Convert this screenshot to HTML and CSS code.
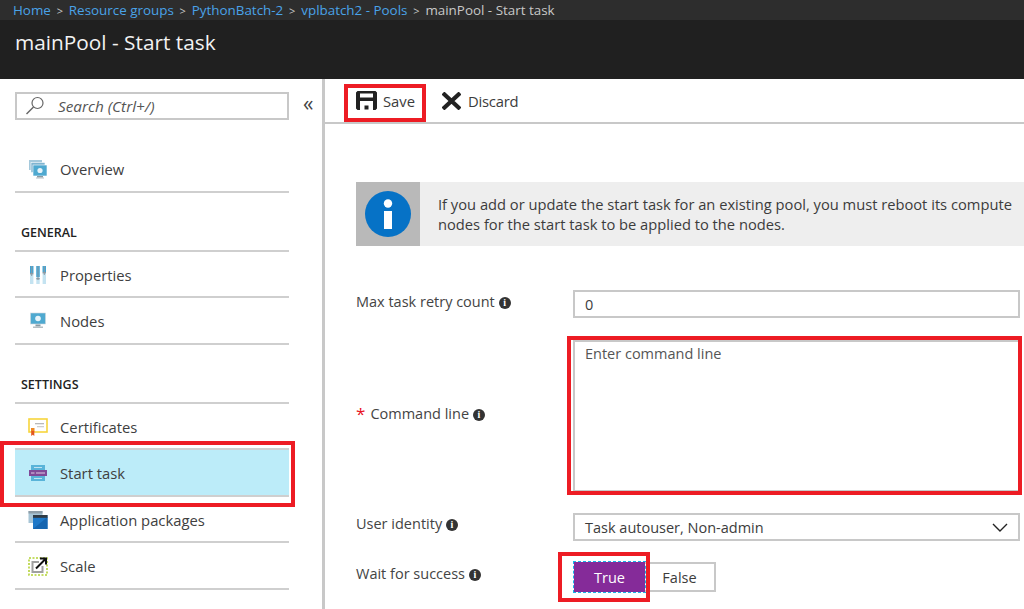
FILE: index.html
```html
<!DOCTYPE html>
<html lang="en">
<head>
<meta charset="utf-8">
<title>mainPool - Start task</title>
<link rel="stylesheet" href="styles.css">
</head>
<body>
<header class="header">
  <nav class="crumbs">
    <a class="crumb">Home</a><span class="sep">&gt;</span>
    <a class="crumb">Resource groups</a><span class="sep">&gt;</span>
    <a class="crumb">PythonBatch-2</a><span class="sep">&gt;</span>
    <a class="crumb">vplbatch2 - Pools</a><span class="sep">&gt;</span>
    <span class="crumb-current">mainPool - Start task</span>
  </nav>
  <h1 class="title">mainPool - Start task</h1>
</header>
<div class="main">
  <aside class="sidebar">
    <div class="search-row">
      <div class="search">
        <svg class="search-icon" width="20" height="20" viewBox="0 0 20 20"><circle cx="12.500" cy="7" r="5.500" fill="none" stroke="#666" stroke-width="1.200"/><path d="M8.500 11 1.500 18" stroke="#666" stroke-width="1.400"/></svg>
        <span class="search-text">Search (Ctrl+/)</span>
      </div>
      <span class="collapse">«</span>
    </div>
    <ul class="nav nav-first">
      <li class="nav-item">
        <svg class="nav-icon" width="20" height="20" viewBox="0 0 20 20"><rect x="1" y="1" width="13" height="10" fill="#a5c9dc"/><rect x="3" y="3.500" width="14" height="10" fill="#7fb4d0" stroke="#fff" stroke-width=".6"/><rect x="5" y="6" width="14" height="11" fill="#4fa9d0" stroke="#fff" stroke-width=".6"/><circle cx="12" cy="11.500" r="2.600" fill="#e8f4fa"/><rect x="9" y="17" width="6" height="1.500" fill="#8a9aa2"/><rect x="8" y="18.500" width="8" height="1" fill="#b5bec3"/></svg>
        <span>Overview</span>
      </li>
    </ul>
    <div class="nav-heading">GENERAL</div>
    <ul class="nav">
      <li class="nav-item">
        <svg class="nav-icon" width="20" height="20" viewBox="0 0 20 20"><g fill="#c4e3f1"><rect x="2" y="1" width="3.400" height="18"/><rect x="8.300" y="1" width="3.400" height="18"/><rect x="14.600" y="1" width="3.400" height="18"/></g><g fill="#3fa5d6"><rect x="2" y="1" width="3.400" height="7"/><rect x="8.300" y="1" width="3.400" height="11"/><rect x="14.600" y="1" width="3.400" height="6"/></g><g fill="#8c9aa3"><rect x="3.200" y="1" width="1" height="10"/><rect x="9.500" y="1" width="1" height="14"/><rect x="15.800" y="1" width="1" height="9"/><rect x="2" y="8" width="3.400" height="1.400"/><rect x="8.300" y="13" width="3.400" height="1.400"/><rect x="14.600" y="7" width="3.400" height="1.400"/></g></svg>
        <span>Properties</span>
      </li>
      <li class="nav-item">
        <svg class="nav-icon" width="20" height="20" viewBox="0 0 20 20"><rect x="2.500" y="2" width="15" height="11" fill="#4fa9d0" stroke="#cfd8dc" stroke-width=".6"/><circle cx="10" cy="7.500" r="2.800" fill="#e8f4fa"/><rect x="7.500" y="13.500" width="5" height="2" fill="#8a9aa2"/><rect x="5" y="15.500" width="10" height="1.500" fill="#b5bec3"/></svg>
        <span>Nodes</span>
      </li>
    </ul>
    <div class="nav-heading">SETTINGS</div>
    <ul class="nav">
      <li class="nav-item">
        <svg class="nav-icon" width="20" height="20" viewBox="0 0 20 20"><rect x="1" y="2" width="18" height="13" fill="#fff" stroke="#f7d53c" stroke-width="1.600"/><rect x="7" y="6" width="9" height="1.300" fill="#b9b9b9"/><rect x="9" y="9" width="7" height="1.300" fill="#cfcfcf"/><rect x="3" y="11" width="3.500" height="3.500" fill="#f08a24"/><path d="M3.200 14h3.100v5l-1.500-1.200L3.200 19z" fill="#e2561f"/></svg>
        <span>Certificates</span>
      </li>
      <li class="nav-item nav-item-active">
        <svg class="nav-icon" width="20" height="20" viewBox="0 0 20 20"><rect x="3" y="2" width="14" height="5" fill="#59b4d9"/><rect x="3" y="13" width="14" height="5" fill="#59b4d9"/><rect x="1" y="7" width="18" height="6" fill="#804998"/><rect x="8" y="9.400" width="9" height="1.200" fill="#cdb5d8"/><rect x="3" y="9.400" width="3.500" height="1.200" fill="#cdb5d8"/><rect x="6" y="4" width="8" height="1" fill="#bfe3f2"/><rect x="6" y="15" width="8" height="1" fill="#bfe3f2"/></svg>
        <span>Start task</span>
      </li>
      <li class="nav-item">
        <svg class="nav-icon" width="20" height="20" viewBox="0 0 20 20"><rect x="0.500" y="1" width="14" height="12" fill="#a7c5d6"/><rect x="0.500" y="1" width="14" height="2.500" fill="#8f9ea8"/><rect x="5" y="5" width="14.500" height="14" fill="#1e78c8"/><path d="M5 19 19.500 7v12z" fill="#1565b0"/><rect x="5" y="5" width="14.500" height="2.800" fill="#2f3a44"/></svg>
        <span>Application packages</span>
      </li>
      <li class="nav-item">
        <svg class="nav-icon" width="20" height="20" viewBox="0 0 20 20"><rect x="1" y="2" width="18" height="17" fill="none" stroke="#b3d235" stroke-width="1.600" stroke-dasharray="2 1.500"/><path d="M11 6H4.500v10h10V10" fill="none" stroke="#a0a0a0" stroke-width="2"/><path d="M8 12.500 17 3.500M12 2.500h6v6" fill="none" stroke="#111" stroke-width="2"/></svg>
        <span>Scale</span>
      </li>
    </ul>
  </aside>
  <section class="content">
    <div class="toolbar">
      <button class="tool tool-save">
        <svg width="21" height="19" viewBox="0 0 21 19"><path fill="#222" d="M1.500 0H19.500L21 1.500V17.500L19.500 19H17V10H4V19H1.500L0 17.500V1.500z"/><rect x="4" y="2.500" width="13" height="4" fill="#fff"/><rect x="8.500" y="14.500" width="4" height="4" fill="#222"/></svg>
        <span>Save</span>
      </button>
      <button class="tool tool-discard">
        <svg width="19" height="18" viewBox="0 0 19 18"><path d="M2.500 2.500 16.500 15.500M16.500 2.500 2.500 15.500" stroke="#222" stroke-width="4.200" fill="none" stroke-linecap="square"/></svg>
        <span>Discard</span>
      </button>
    </div>
    <div class="banner">
      <div class="banner-icon">
        <svg width="46" height="46" viewBox="0 0 46 46"><circle cx="23" cy="23" r="23" fill="#0672c6"/><circle cx="23" cy="12.500" r="4.200" fill="#fff"/><rect x="19" y="20" width="8" height="18" fill="#fff"/></svg>
      </div>
      <p class="banner-text">If you add or update the start task for an existing pool, you must reboot its compute nodes for the start task to be applied to the nodes.</p>
    </div>
    <form class="form">
      <div class="row row-retry">
        <label class="label">Max task retry count <span class="hint">i</span></label>
        <div class="field input">0</div>
      </div>
      <div class="row row-command">
        <label class="label"><span class="required">*</span>Command line <span class="hint">i</span></label>
        <div class="field textarea">Enter command line</div>
      </div>
      <div class="row row-identity">
        <label class="label">User identity <span class="hint">i</span></label>
        <div class="field input select">
          <span>Task autouser, Non-admin</span>
          <svg width="16" height="9" viewBox="0 0 16 9"><path d="M1 1l7 7 7-7" fill="none" stroke="#222" stroke-width="1.400"/></svg>
        </div>
      </div>
      <div class="row row-wait">
        <label class="label">Wait for success <span class="hint">i</span></label>
        <div class="toggle">
          <span class="toggle-btn toggle-on">True</span>
          <span class="toggle-btn toggle-off">False</span>
        </div>
      </div>
    </form>
  </section>
</div>
<div class="mark mark-save"></div>
<div class="mark mark-task"></div>
<div class="mark mark-command"></div>
<div class="mark mark-true"></div>
</body>
</html>
```
FILE: styles.css
```css
* { box-sizing: border-box; }
html, body { margin: 0; padding: 0; }
body {
  position: relative;
  width: 1024px;
  height: 609px;
  overflow: hidden;
  background: #fff;
  color: #3c3c3c;
  font-family: "Open Sans", "Noto Sans", "Liberation Sans", sans-serif;
  font-size: 14px;
}
.header { height: 79px; background: #202020; }
.crumbs {
  display: flex;
  align-items: center;
  height: 20px;
  padding-left: 13px;
  background: #2d2d2d;
  font-size: 13.400px;
  white-space: nowrap;
}
.crumb { color: #4aa3e8; }
.crumb-current { color: #c8c8c8; }
.sep { width: 18px; text-align: center; color: #c8c8c8; font-size: 11px; }
.crumbs .sep:last-of-type { width: 19px; }
.title {
  margin: 0;
  padding: 7px 0 0 15px;
  color: #f2f2f2;
  font-size: 20.800px;
  font-weight: 400;
  line-height: 30px;
}
.main { display: flex; height: 530px; }
.sidebar {
  flex: 0 0 325px;
  padding: 13px 33px 0 15px;
  border-right: 3px solid #c8c8c8;
}
.search-row { position: relative; display: flex; }
.search {
  display: flex;
  align-items: center;
  width: 274px;
  height: 28px;
  border: 2px solid #c8c8c8;
  padding-left: 8px;
}
.search-text { margin-left: 13px; font-style: italic; font-size: 15.300px; color: #555; }
.collapse {
  position: absolute;
  left: 288px;
  top: -2px;
  color: #444;
  font-size: 21px;
  line-height: 26px;
}
.nav { list-style: none; margin: 0; padding: 0; width: 274px; }
.nav-first { margin-top: 26px; }
.nav-item {
  display: flex;
  align-items: center;
  height: 46.500px;
  padding: 2px 0 0 13px;
  border-bottom: 2px solid #cfcfcf;
  font-size: 14.800px;
  color: #404040;
}
.nav-icon { flex: none; margin-right: 12px; }
.nav-item-active { background: #bcecf9; }
.nav-heading {
  height: 59px;
  padding: 31px 0 0 6px;
  border-bottom: 2px solid #cfcfcf;
  width: 274px;
  color: #222;
  font-size: 12.500px;
  font-weight: 600;
  line-height: 18px;
}
.content { flex: 1; min-width: 0; overflow: hidden; }
.toolbar {
  display: flex;
  align-items: center;
  height: 45px;
  border-bottom: 2px solid #c8c8c8;
  padding-left: 31px;
}
.tool {
  display: flex;
  align-items: center;
  border: 0;
  padding: 0;
  background: none;
  color: #3c3c3c;
  font: inherit;
  font-size: 14.800px;
}
.tool span { padding-top: 1px; }
.tool-save svg { margin-right: 6px; }
.tool-discard { margin-left: 27px; letter-spacing: -0.25px; }
.tool-discard svg { margin-right: 7px; }
.banner {
  display: flex;
  width: 690px;
  height: 64px;
  margin: 58px 0 0 31px;
  background: #eeeeee;
}
.banner-icon {
  display: flex;
  flex: 0 0 64px;
  align-items: center;
  justify-content: center;
  background: #b9b9b9;
}
.banner-text {
  margin: 0;
  width: 600px;
  padding: 12px 0 0 18px;
  font-size: 14.700px;
  line-height: 20px;
  color: #3c3c3c;
}
.form { width: 664px; margin-left: 31px; }
.row { display: grid; grid-template-columns: 217px 447px; }
.label {
  font-size: 14.500px;
  line-height: 20px;
  color: #444;
  white-space: nowrap;
}
.hint {
  display: inline-block;
  width: 12px;
  height: 12px;
  border-radius: 50%;
  background: #333;
  color: #fff;
  font-size: 10px;
  font-weight: 700;
  font-family: "Liberation Serif", serif;
  line-height: 12px;
  text-align: center;
  vertical-align: 1px;
}
.required { margin-right: 5px; color: #e81123; font-size: 17px; line-height: 14px; vertical-align: -1px; }
.field {
  border: 2px solid #c8c8c8;
  padding-left: 10px;
  color: #3c3c3c;
  font-size: 14.500px;
}
.input { display: flex; align-items: center; height: 28px; }
.row-retry { margin-top: 44px; }
.row-retry .label { padding-top: 2px; }
.row-command { height: 150px; margin-top: 22px; }
.row-command .label { padding-top: 64px; }
.textarea { height: 152px; padding-top: 2px; color: #555; }
.row-identity { margin-top: 23px; }
.row-identity .label { padding-top: 1px; }
.select { justify-content: space-between; padding-right: 10px; }
.row-wait { margin-top: 21px; }
.row-wait .label { padding-top: 2px; }
.toggle { display: flex; height: 30px; }
.toggle-btn {
  display: flex;
  align-items: center;
  justify-content: center;
  width: 71px;
  font-size: 14.500px;
}
.toggle-on {
  margin-left: 1px;
  background: #852b99;
  color: #fff;
  outline: 1px dashed #19b5e8;
}
.toggle-off { border: 2px solid #c8c8c8; border-left: 0; color: #3c3c3c; }
.mark { position: absolute; border: 4px solid #ed1c24; pointer-events: none; }
.mark-save { left: 344px; top: 84px; width: 82px; height: 38px; }
.mark-task { left: 0; top: 441px; width: 295px; height: 66px; }
.mark-command { left: 567px; top: 336px; width: 455px; height: 159px; }
.mark-true { left: 558px; top: 552px; width: 92px; height: 50px; }
```
